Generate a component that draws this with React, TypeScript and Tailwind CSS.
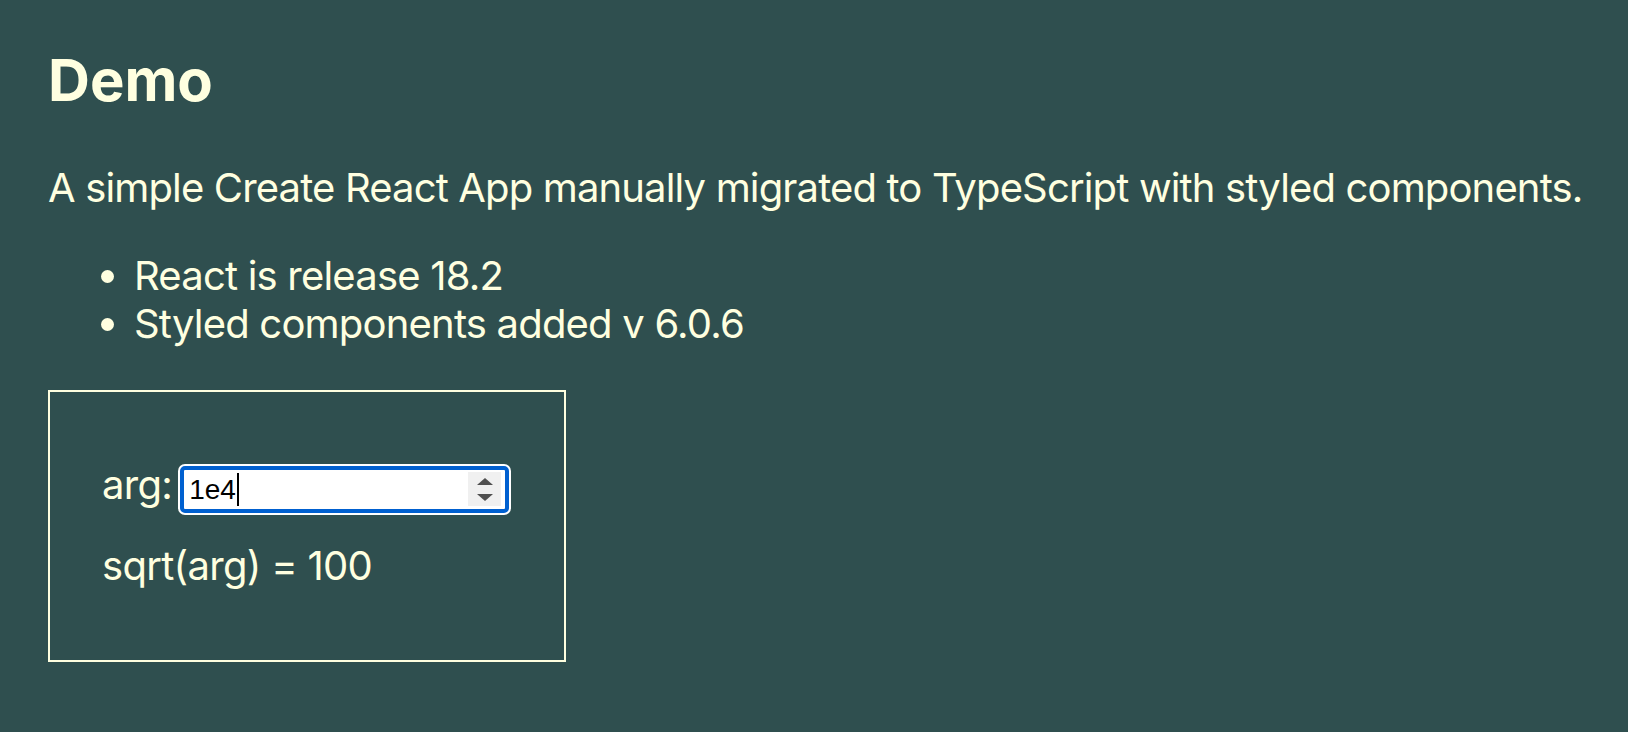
import React from 'react';

function NumberField({ value }: { value: string }) {
  return (
    <div className="ml-[8px] flex h-[47px] w-[329px] items-center rounded-[5px] border-4 border-[#0060d0] bg-white pl-[5px] pr-[4px] ring-2 ring-white">
      <span className="pt-[2px] text-[28px] leading-[30px] tracking-normal text-black [font-family:'Liberation_Sans',Arial,sans-serif]">{value}</span>
      <span className="ml-[1px] h-[33px] w-[2px] bg-black" />
      <div className="ml-auto flex h-[34px] w-[33px] flex-col items-center justify-center gap-[9px] bg-[#f0f0f0]">
        <span className="h-0 w-0 border-x-[8px] border-b-[7px] border-x-transparent border-b-[#505050]" />
        <span className="h-0 w-0 border-x-[8px] border-t-[7px] border-x-transparent border-t-[#505050]" />
      </div>
    </div>
  );
}

export default function App() {
  return (
    <div className="min-h-screen bg-[#2f4f4f] pl-[48px] pt-[45px] text-[#ffffe0] [font-family:Inter,'Noto_Sans',sans-serif]">
      <h1 className="text-[58px] font-bold leading-[70px]">Demo</h1>
      <p className="mt-[49px] whitespace-nowrap text-[40px] leading-[48px] tracking-[-0.85px]">
        A simple Create React App manually migrated to TypeScript with styled components.
      </p>
      <ul className="mt-[40px] list-disc pl-[86px] text-[40px] leading-[48px] tracking-[-0.8px]">
        <li>React is release 18.2</li>
        <li>Styled components added v 6.0.6</li>
      </ul>

      <div className="mt-[42px] box-border h-[272px] w-[518px] border-2 border-[#ffffe0] pl-[52px] pt-[69px] text-[40px] leading-[48px] tracking-[-0.7px]">
        <div className="flex items-baseline">
          <span>arg:</span>
          <NumberField value="1e4" />
        </div>
        <p className="mt-[29px]">sqrt(arg) = 100</p>
      </div>
    </div>
  );
}
